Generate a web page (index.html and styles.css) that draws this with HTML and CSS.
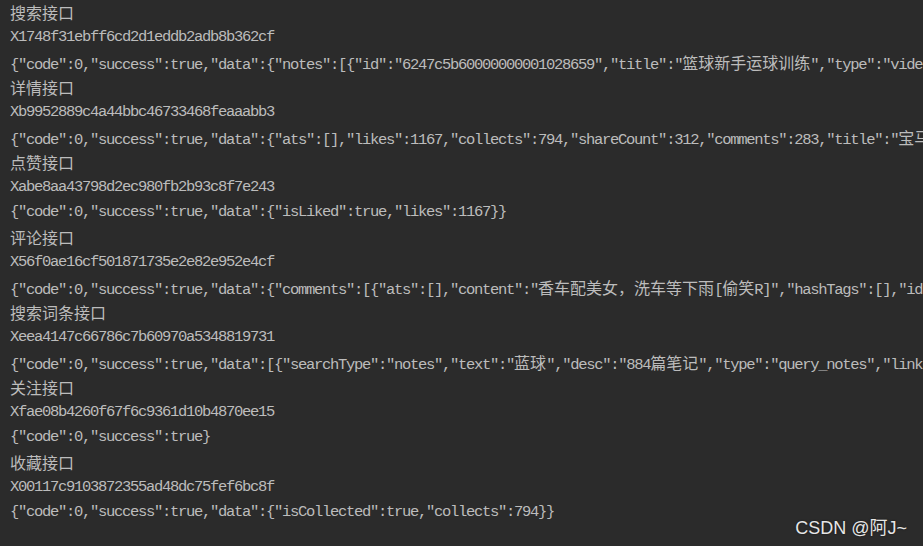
FILE: index.html
```html
<!DOCTYPE html>
<html lang="zh-CN">
<head>
<meta charset="utf-8">
<title>console</title>
<link rel="stylesheet" href="styles.css">
</head>
<body>
<div class="console">
<div class="line cn">搜索接口</div>
<div class="line">X1748f31ebff6cd2d1eddb2adb8b362cf</div>
<div class="line">{"code":0,"success":true,"data":{"notes":[{"id":"6247c5b60000000001028659","title":"<span class="cn">篮球新手运球训练</span>","type":"vide</div>
<div class="line cn">详情接口</div>
<div class="line">Xb9952889c4a44bbc46733468feaaabb3</div>
<div class="line">{"code":0,"success":true,"data":{"ats":[],"likes":1167,"collects":794,"shareCount":312,"comments":283,"title":"<span class="cn">宝马</span></div>
<div class="line cn">点赞接口</div>
<div class="line">Xabe8aa43798d2ec980fb2b93c8f7e243</div>
<div class="line">{"code":0,"success":true,"data":{"isLiked":true,"likes":1167}}</div>
<div class="line cn">评论接口</div>
<div class="line">X56f0ae16cf501871735e2e82e952e4cf</div>
<div class="line">{"code":0,"success":true,"data":{"comments":[{"ats":[],"content":"<span class="cn">香车配美女，洗车等下雨</span>[<span class="cn">偷笑</span>R]","hashTags":[],"id</div>
<div class="line cn">搜索词条接口</div>
<div class="line">Xeea4147c66786c7b60970a5348819731</div>
<div class="line">{"code":0,"success":true,"data":[{"searchType":"notes","text":"<span class="cn">蓝球</span>","desc":"884<span class="cn">篇笔记</span>","type":"query_notes","link</div>
<div class="line cn">关注接口</div>
<div class="line">Xfae08b4260f67f6c9361d10b4870ee15</div>
<div class="line">{"code":0,"success":true}</div>
<div class="line cn">收藏接口</div>
<div class="line">X00117c9103872355ad48dc75fef6bc8f</div>
<div class="line">{"code":0,"success":true,"data":{"isCollected":true,"collects":794}}</div>
</div>
<div class="watermark">CSDN @阿J~</div>
</body>
</html>
```

FILE: styles.css
```css
html, body {
  margin: 0;
  padding: 0;
  height: 100%;
}
body {
  background: #2b2b2b;
  overflow: hidden;
  position: relative;
}
.console {
  padding: 0 0 0 10px;
  font-family: "Liberation Mono", "Noto Sans CJK SC", monospace;
  font-size: 15.5px;
  letter-spacing: -1.3px;
  color: #bcbcbc;
}
.line {
  height: 25px;
  line-height: 25px;
  white-space: pre;
  overflow: hidden;
}
.cn {
  font-family: "Noto Sans CJK SC", sans-serif;
  font-size: 16px;
  letter-spacing: 0;
}
.watermark {
  position: absolute;
  right: 16px;
  bottom: 9px;
  font-family: "Liberation Sans", "Noto Sans CJK SC", sans-serif;
  font-size: 18px;
  line-height: 1;
  color: #e6e6e6;
  text-shadow: 0 0 2px rgba(0, 0, 0, 0.6);
}
```
